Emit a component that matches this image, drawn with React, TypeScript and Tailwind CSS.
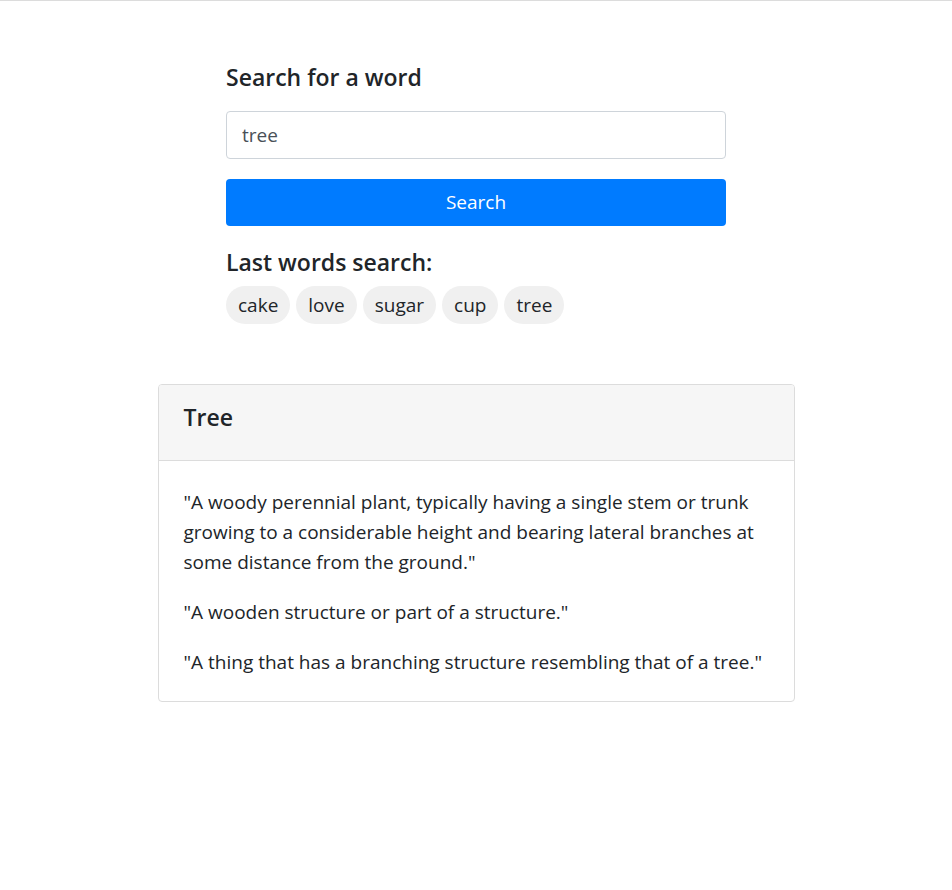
const recent = ['cake', 'love', 'sugar', 'cup', 'tree']

const definitions = [
  '"A woody perennial plant, typically having a single stem or trunk growing to a considerable height and bearing lateral branches at some distance from the ground."',
  '"A wooden structure or part of a structure."',
  '"A thing that has a branching structure resembling that of a tree."',
]

export default function App() {
  return (
    <div className="min-h-[890px] border-t border-[#dcdcdc] bg-white font-['Open_Sans','Liberation_Sans',sans-serif] text-[#212529]">
      <div className="mx-auto w-[500px] pt-[60px]">
        <h2 className="text-[23px] font-semibold leading-[32px]">Search for a word</h2>
        <input
          defaultValue="tree"
          className="mt-[18px] block h-[48px] w-full rounded-[4px] border border-[#ced4da] px-[15px] text-[19px] text-[#495057] outline-none"
        />
        <button className="mt-[20px] block h-[47px] w-full rounded-[4px] bg-[#007bff] text-[19px] text-white">
          Search
        </button>
        <h3 className="mt-[20px] text-[23px] font-semibold leading-[32px]">Last words search:</h3>
        <div className="mt-[8px] flex gap-[6px]">
          {recent.map((w) => (
            <span key={w} className="flex h-[38px] items-center rounded-full bg-[#f0f0f0] px-[12px] text-[19px]">
              {w}
            </span>
          ))}
        </div>
      </div>

      <div className="mx-auto mt-[60px] w-[637px] overflow-hidden rounded-[4px] border border-[#dcdcdc]">
        <div className="h-[76px] border-b border-[#dcdcdc] bg-[#f6f6f6] px-[25px] pt-[14px]">
          <h4 className="text-[23px] font-semibold leading-[36px]">Tree</h4>
        </div>
        <div className="flex flex-col gap-[20px] px-[25px] pb-[24px] pt-[26px] text-[19px] leading-[30px]">
          {definitions.map((d) => (
            <p key={d}>{d}</p>
          ))}
        </div>
      </div>
    </div>
  )
}
